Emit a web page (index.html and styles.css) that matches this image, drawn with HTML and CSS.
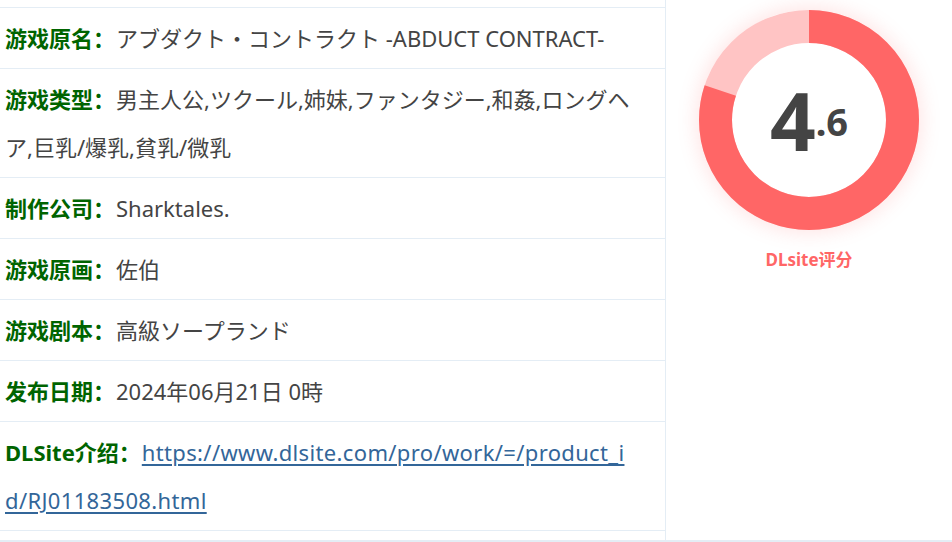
FILE: index.html
```html
<!DOCTYPE html>
<html lang="zh">
<head>
<meta charset="utf-8">
<link rel="stylesheet" href="styles.css">
</head>
<body>
<div class="wrap">
  <div class="info">
    <div class="row"><span class="lbl">游戏原名：</span><span class="val">アブダクト・コントラクト -ABDUCT CONTRACT-</span></div>
    <div class="row"><span class="lbl">游戏类型：</span><span class="val">男主人公,ツクール,姉妹,ファンタジー,和姦,ロングヘア,巨乳/爆乳,貧乳/微乳</span></div>
    <div class="row"><span class="lbl">制作公司：</span><span class="val">Sharktales.</span></div>
    <div class="row"><span class="lbl">游戏原画：</span><span class="val">佐伯</span></div>
    <div class="row"><span class="lbl">游戏剧本：</span><span class="val">高級ソープランド</span></div>
    <div class="row"><span class="lbl">发布日期：</span><span class="val">2024年06月21日 0時</span></div>
    <div class="row"><span class="lbl">DLSite介绍：</span><a class="link" href="#">https://www.dlsite.com/pro/work/=/product_id/RJ01183508.html</a></div>
  </div>
  <div class="side">
    <div class="donut">
      <svg class="ring" width="220" height="220" viewBox="0 0 220 220">
        <circle cx="110" cy="110" r="93.5" fill="none" stroke="#ffc4c4" stroke-width="33"/>
        <circle cx="110" cy="110" r="93.5" fill="none" stroke="#ff6666" stroke-width="33" stroke-dasharray="470.0 587.5" transform="rotate(-90 110 110)"/>
      </svg>
      <div class="score"><span class="big">4</span><span class="small">.6</span></div>
    </div>
    <div class="cap">DLsite评分</div>
  </div>
</div>
</body>
</html>
```
FILE: styles.css
```css
html, body {
  margin: 0;
  padding: 0;
  background: #fff;
}
body {
  font-family: "Noto Sans", "Noto Sans CJK SC", sans-serif;
  color: #444;
}
.wrap {
  display: flex;
  width: 952px;
  height: 540px;
  border-bottom: 2px solid #e4edf5;
}
.info {
  width: 666px;
  border-right: 1px solid #e4edf5;
  padding-top: 7px;
  box-sizing: border-box;
}
.row {
  border-top: 1px solid #e4edf5;
  padding: 6px 26px 6px 5px;
  font-size: 22px;
  line-height: 48px;
  word-break: break-all;
  font-family: "Noto Sans", "Noto Sans CJK SC", sans-serif;
}
.row > * {
  vertical-align: top;
}
.row:last-child {
  border-bottom: 1px solid #e4edf5;
}
.lbl {
  color: #006400;
  font-weight: bold;
  margin-right: 1px;
}
.val {
  color: #444;
}
.link {
  color: #336699;
  text-decoration: underline;
  text-underline-offset: 3px;
  letter-spacing: 0.35px;
}
.side {
  flex: 1;
  display: flex;
  flex-direction: column;
  align-items: center;
  padding-top: 10px;
}
.donut {
  position: relative;
  width: 220px;
  height: 220px;
  border-radius: 50%;
  box-shadow: 0 0 18px 4px rgba(255, 120, 120, 0.18);
}
.ring {
  display: block;
}
.score {
  position: absolute;
  inset: 0;
  display: flex;
  align-items: center;
  justify-content: center;
  color: #444;
  font-family: "Noto Sans", sans-serif;
  font-weight: bold;
}
.big {
  font-size: 80px;
  line-height: 1;
}
.small {
  font-size: 38px;
  line-height: 1;
  margin-top: 2px;
}
.cap {
  margin-top: 16px;
  color: #ff6666;
  font-weight: bold;
  font-size: 17px;
  font-family: "Noto Sans", "Noto Sans CJK SC", sans-serif;
}
```
